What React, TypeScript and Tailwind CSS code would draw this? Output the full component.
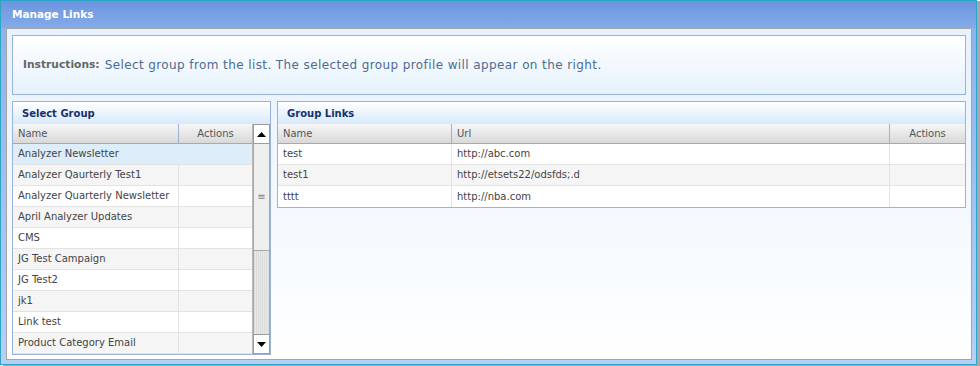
import React from 'react';

const groups = [
    'Analyzer Newsletter',
    'Analyzer Qaurterly Test1',
    'Analyzer Quarterly Newsletter',
    'April Analyzer Updates',
    'CMS',
    'JG Test Campaign',
    'JG Test2',
    'jk1',
    'Link test',
    'Product Category Email',
];

const links = [
    { name: 'test', url: 'http://abc.com' },
    { name: 'test1', url: 'http://etsets22/odsfds;.d' },
    { name: 'tttt', url: 'http://nba.com' },
];

const font = { fontFamily: '"DejaVu Sans", Verdana, sans-serif' };

// Panel header with the blue fade
const PanelHeader: React.FC<{ title: string }> = ({ title }) => (
    <div className="h-[22px] flex items-center pl-[9px] bg-gradient-to-b from-white to-[#d6e9fb] text-[10px] font-bold text-[#15306c]">
        {title}
    </div>
);

const ScrollBar: React.FC = () => (
    <div className="w-[18px] flex flex-col bg-[#e2e2e2] border-l border-[#b8b8b8]">
        <div className="h-[20px] flex items-center justify-center bg-white border border-[#9c9c9c]">
            <svg width="9" height="5" viewBox="0 0 9 5"><path d="M0 5 L4.5 0 L9 5 Z" fill="#000" /></svg>
        </div>
        <div className="h-[107px] flex items-center justify-center bg-[#efefef] border border-[#a8a8a8] border-t-0">
            <span className="text-[#888] text-[10px] leading-none">≡</span>
        </div>
        <div className="flex-1 bg-[repeating-linear-gradient(90deg,#dcdcdc_0,#dcdcdc_1px,#e8e8e8_1px,#e8e8e8_2px)] border-x border-[#a8a8a8]" />
        <div className="h-[20px] flex items-center justify-center bg-white border border-[#9c9c9c]">
            <svg width="9" height="5" viewBox="0 0 9 5"><path d="M0 0 L4.5 5 L9 0 Z" fill="#000" /></svg>
        </div>
    </div>
);

const thClass = 'h-[20px] flex items-center text-[10px] text-[#555] bg-gradient-to-b from-[#f6f6f6] to-[#d9d9d9] border-b border-[#a9a9a9]';

export default function App() {
    return (
        <div className="w-[980px] h-[366px] bg-white" style={font}>
            <div className="w-[977px] h-[365px] border border-[#2aa6c6] flex flex-col shadow-[3px_1px_0_#a8a8a8]">
                {/* title bar */}
                <div className="h-[27px] flex items-center pl-[11px] bg-gradient-to-b from-[#6c95e0] to-[#83abe9] text-white text-[10.5px] font-bold">
                    Manage Links
                </div>
                <div className="flex-1 flex flex-col pl-[5px] pr-[4px] pb-[4px] bg-gradient-to-b from-[#8fb2ec] to-[#b6d0f6]">
                    <div className="flex-1 flex flex-col border border-[#a4a4a4] bg-gradient-to-b from-[#e6f2fd] to-white pt-[6px] px-[5px]">
                        {/* instructions */}
                        <div className="h-[60px] flex items-center pl-[10px] border border-[#9bb3d9] bg-gradient-to-b from-white to-[#e5f1fc]">
                            <span className="font-bold text-[#666] text-[10.7px]">Instructions:</span>
                            <span className="ml-[5px] text-[#4d6b92] text-[12px] tracking-[0.4px]">Select group from the list. The selected group profile will appear on the right.</span>
                        </div>

                        <div className="flex gap-[6px] mt-[6px] items-start">
                            {/* Select Group */}
                            <div className="w-[259px] border border-[#9bb3d9] bg-white flex flex-col">
                                <PanelHeader title="Select Group" />
                                <div className="flex">
                                    <div className="flex-1 flex flex-col">
                                        <div className={thClass}>
                                            <div className="w-[165px] pl-[5px]">Name</div>
                                            <div className="flex-1 h-full flex items-center justify-center border-l border-[#9cb2d2]">Actions</div>
                                        </div>
                                        {groups.map((g, i) => (
                                            <div
                                                key={g}
                                                className={`h-[21px] flex text-[10px] text-[#444] border-b border-[#e3e3e3] ${i === 0 ? 'bg-[#deedfa]' : i % 2 === 1 ? 'bg-[#f5f5f5]' : 'bg-white'}`}
                                            >
                                                <div className="w-[165px] pl-[5px] pb-[1px] flex items-center">{g}</div>
                                                <div className={`flex-1 ${i === 0 ? '' : 'border-l border-[#e3e3e3]'}`} />
                                            </div>
                                        ))}
                                    </div>
                                    <ScrollBar />
                                </div>
                            </div>

                            {/* Group Links */}
                            <div className="flex-1 border border-[#9bb3d9] bg-white flex flex-col">
                                <PanelHeader title="Group Links" />
                                <div className={thClass}>
                                    <div className="w-[173px] pl-[5px]">Name</div>
                                    <div className="w-[438px] h-full flex items-center pl-[5px] border-l border-[#9cb2d2]">Url</div>
                                    <div className="flex-1 h-full flex items-center justify-center border-l border-[#9cb2d2]">Actions</div>
                                </div>
                                {links.map((l, i) => (
                                    <div
                                        key={l.name}
                                        className={`h-[21px] flex text-[10px] text-[#444] border-b border-[#e3e3e3] last:border-b-0 ${i % 2 === 1 ? 'bg-[#f5f5f5]' : 'bg-white'}`}
                                    >
                                        <div className="w-[173px] pl-[5px] pb-[1px] flex items-center">{l.name}</div>
                                        <div className="w-[438px] pl-[5px] pb-[1px] flex items-center border-l border-[#e3e3e3]">{l.url}</div>
                                        <div className="flex-1 border-l border-[#e3e3e3]" />
                                    </div>
                                ))}
                            </div>
                        </div>
                    </div>
                </div>
            </div>
        </div>
    );
}
